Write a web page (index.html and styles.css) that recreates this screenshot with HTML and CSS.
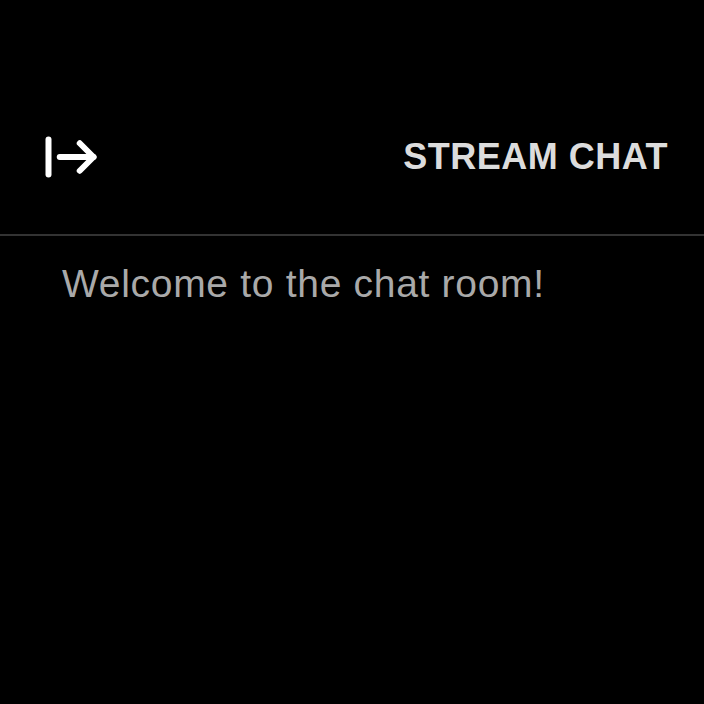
FILE: index.html
```html
<!DOCTYPE html>
<html>
<head>
<meta charset="utf-8">
<link rel="stylesheet" href="styles.css">
</head>
<body>
<div class="chat">
  <header class="chat-header">
    <button class="collapse-btn" aria-label="Collapse">
      <svg width="60" height="60" viewBox="0 0 24 24" fill="none" stroke="#ffffff" stroke-width="2.4" stroke-linecap="round" stroke-linejoin="round">
        <path d="M3 5v14"/>
        <path d="M21 12H7.5"/>
        <path d="m15.5 17.5 5.5-5.5-5.5-5.5"/>
      </svg>
    </button>
    <h1 class="chat-title">STREAM CHAT</h1>
  </header>
  <div class="chat-body">
    <p class="welcome">Welcome to the chat room!</p>
  </div>
</div>
</body>
</html>
```
FILE: styles.css
```css
html, body {
  margin: 0;
  padding: 0;
  background: #000;
  height: 100%;
}
body {
  font-family: "Liberation Sans", Arial, sans-serif;
}
.chat {
  padding-top: 80px;
}
.chat-header {
  display: flex;
  align-items: center;
  justify-content: space-between;
  padding: 0 36px 0 41px;
  border-bottom: 2px solid #333333;
  box-sizing: border-box;
  height: 156px;
}
.collapse-btn {
  background: none;
  border: 0;
  padding: 0;
  width: 60px;
  height: 60px;
  display: flex;
}
.chat-title {
  margin: 0;
  font-size: 36px;
  font-weight: 700;
  color: #dcdcdc;
  letter-spacing: 0.5px;
}
.chat-body {
  padding: 26px 62px;
}
.welcome {
  margin: 0;
  font-size: 39px;
  color: #a9a9a9;
  letter-spacing: 0.7px;
}
```
